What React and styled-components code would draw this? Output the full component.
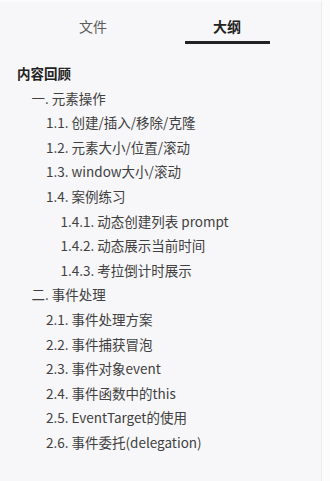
import React from 'react';
import styled, { createGlobalStyle } from 'styled-components';

const GlobalStyle = createGlobalStyle`
    html, body {
        margin: 0;
        padding: 0;
        background: #fcfcfd;
    }
    body {
        font-family: "Noto Sans CJK SC", "Noto Sans", sans-serif;
    }
`;

const Page = styled.div`
    display: flex;
    width: 330px;
    height: 481px;
    overflow: hidden;
`;

const Panel = styled.div`
    width: 321px;
    background: #f7f7f9;
    border-right: 1px solid #ebebee;
    border-top: 2px solid #fbfbfc;
    display: flex;
    flex-direction: column;
`;

const Tabs = styled.div`
    display: flex;
    padding: 0 27px 0 26px;
    height: 42px;
`;

const Tab = styled.div`
    flex: 1;
    display: flex;
    justify-content: center;
    align-items: flex-start;
    position: relative;
    padding-top: 14px;
    line-height: 20px;
    font-size: 14px;
    font-weight: ${p => (p.active ? 700 : 400)};
    color: ${p => (p.active ? '#222' : '#5a5a5a')};

    &::after {
        content: '';
        display: ${p => (p.active ? 'block' : 'none')};
        position: absolute;
        bottom: 0;
        left: 50%;
        width: 85px;
        height: 3px;
        margin-left: -42px;
        background: #222;
    }
`;

const Outline = styled.ul`
    list-style: none;
    margin: 0;
    padding: 17px 0 0 17px;
`;

const Item = styled.li`
    height: 24.6px;
    line-height: 24.6px;
    padding-left: ${p => p.level * 14.5}px;
    font-size: 13.5px;
    white-space: nowrap;
    color: ${p => (p.level === 0 ? '#222' : '#404040')};
    font-weight: ${p => (p.level === 0 ? 700 : 400)};
`;

const items = [
    [0, '内容回顾'],
    [1, '一. 元素操作'],
    [2, '1.1. 创建/插入/移除/克隆'],
    [2, '1.2. 元素大小/位置/滚动'],
    [2, '1.3. window大小/滚动'],
    [2, '1.4. 案例练习'],
    [3, '1.4.1. 动态创建列表 prompt'],
    [3, '1.4.2. 动态展示当前时间'],
    [3, '1.4.3. 考拉倒计时展示'],
    [1, '二. 事件处理'],
    [2, '2.1. 事件处理方案'],
    [2, '2.2. 事件捕获冒泡'],
    [2, '2.3. 事件对象event'],
    [2, '2.4. 事件函数中的this'],
    [2, '2.5. EventTarget的使用'],
    [2, '2.6. 事件委托(delegation)'],
];

const App = () => {
    return (
        <Page>
            <GlobalStyle />
            <Panel>
                <Tabs>
                    <Tab>文件</Tab>
                    <Tab active>大纲</Tab>
                </Tabs>
                <Outline>
                    {items.map(([level, text]) => (
                        <Item key={text} level={level}>{text}</Item>
                    ))}
                </Outline>
            </Panel>
        </Page>
    );
};

export default App;
